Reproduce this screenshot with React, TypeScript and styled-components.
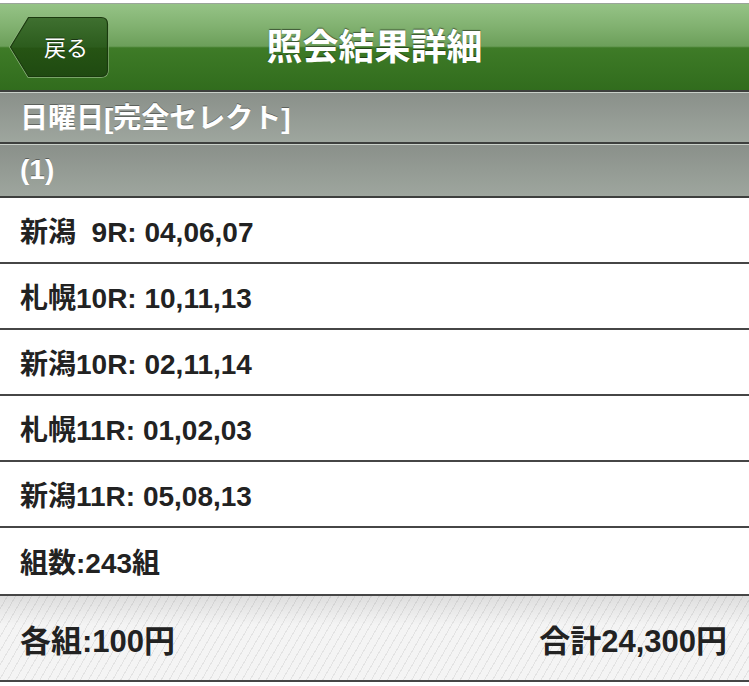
import React from 'react';
import styled, { createGlobalStyle } from 'styled-components';

const GlobalStyle = createGlobalStyle`
    html, body {
        margin: 0;
        padding: 0;
        background: #ffffff;
    }
    body {
        font-family: "Liberation Sans", "Noto Sans CJK JP", sans-serif;
        -webkit-font-smoothing: antialiased;
    }
`;

const Page = styled.div`
    width: 749px;
    padding-top: 3px;
    display: flex;
    flex-direction: column;
`;

const Header = styled.header`
    height: 86px;
    border-top: 1px solid #9aa59a;
    border-bottom: 2px solid #3d3f3d;
    background: linear-gradient(
        to bottom,
        #95c386 0%,
        #82b271 25%,
        #6c9f5a 49%,
        #3e7b27 51%,
        #316c1d 100%
    );
    display: grid;
    grid-template-columns: 1fr auto 1fr;
    align-items: center;
`;

const BackButton = styled.button`
    position: relative;
    justify-self: start;
    margin-left: 9px;
    width: 100px;
    height: 62px;
    padding: 0 0 2px 14px;
    border: none;
    background: none;
    color: #ffffff;
    font-family: "Liberation Sans", "Noto Sans CJK JP", sans-serif;
    font-size: 22px;
    cursor: pointer;
    display: flex;
    align-items: center;
    justify-content: center;
`;

const BackShape = styled.svg`
    position: absolute;
    inset: 0;
`;

const BackLabel = styled.span`
    position: relative;
    text-shadow: 0 -1px 0 rgba(0, 0, 0, 0.45);
`;

const Title = styled.h1`
    margin: 0;
    font-size: 36px;
    font-weight: 700;
    color: #ffffff;
    text-shadow: 0 -1px 1px rgba(0, 0, 0, 0.5);
    padding-bottom: 7px;
`;

const SectionBar = styled.div<{ $height: number; $lift: number }>`
    height: ${p => p.$height}px;
    border-top: 1px solid #c9d0c9;
    border-bottom: 2px solid #3d3f3d;
    background: linear-gradient(to bottom, #8a908a 0%, #9ea69e 100%);
    display: flex;
    align-items: center;
    padding: 0 0 ${p => p.$lift}px 20px;
    box-sizing: content-box;
    color: #ffffff;
    font-size: 28px;
    font-weight: 700;
    text-shadow: 0 -1px 0 rgba(0, 0, 0, 0.35);
`;

const ResultRow = styled.div<{ $tall?: boolean }>`
    box-sizing: border-box;
    height: ${p => (p.$tall ? 68 : 66)}px;
    border-bottom: 2px solid #464646;
    background: #ffffff;
    display: flex;
    align-items: center;
    padding-left: 20px;
    color: #222222;
    font-size: 28px;
    font-weight: 700;
    white-space: pre;
`;

const Footer = styled.footer`
    height: 84px;
    border-bottom: 2px solid #464646;
    background:
        linear-gradient(to bottom, rgba(0, 0, 0, 0.09) 0%, rgba(0, 0, 0, 0) 35%),
        repeating-linear-gradient(
            120deg,
            #f4f4f4 0px,
            #f4f4f4 6px,
            #e3e3e3 6px,
            #e3e3e3 7px
        );
    display: flex;
    align-items: center;
    justify-content: space-between;
    padding: 0 22px 0 20px;
`;

const FooterText = styled.span`
    color: #222222;
    font-size: 31px;
    font-weight: 700;
`;

const races = [
    { place: '新潟', race: '\u00a0\u00a09', nums: '04,06,07' },
    { place: '札幌', race: '10', nums: '10,11,13' },
    { place: '新潟', race: '10', nums: '02,11,14' },
    { place: '札幌', race: '11', nums: '01,02,03' },
    { place: '新潟', race: '11', nums: '05,08,13' },
];

const App: React.FC = () => (
    <>
        <GlobalStyle />
        <Page>
            <Header>
                <BackButton type="button">
                    <BackShape width="100" height="62" viewBox="0 0 100 62">
                        <defs>
                            <linearGradient id="backFill" x1="0" y1="0" x2="0" y2="1">
                                <stop offset="0" stopColor="#3f7030" />
                                <stop offset="0.5" stopColor="#2c5c1d" />
                                <stop offset="0.52" stopColor="#265414" />
                                <stop offset="1" stopColor="#1f4a11" />
                            </linearGradient>
                        </defs>
                        <path
                            d="M19.5 1.5 H92 Q98.5 1.5 98.5 8 V54 Q98.5 60.5 92 60.5 H19.5 L1.5 31 Z"
                            fill="none"
                            stroke="#8fb77f"
                            strokeWidth="2.5"
                            strokeLinejoin="round"
                        />
                        <path
                            d="M19.5 1.5 H92 Q98.5 1.5 98.5 8 V54 Q98.5 60.5 92 60.5 H19.5 L1.5 31 Z"
                            fill="url(#backFill)"
                            stroke="#1a3a0e"
                            strokeWidth="1.2"
                            strokeLinejoin="round"
                        />
                    </BackShape>
                    <BackLabel>戻る</BackLabel>
                </BackButton>
                <Title>照会結果詳細</Title>
                <span />
            </Header>
            <SectionBar $height={45} $lift={4}>日曜日[完全セレクト]</SectionBar>
            <SectionBar $height={49} $lift={2}>(1)</SectionBar>
            {races.map((r, i) => (
                <ResultRow key={i}>{`${r.place}${r.race}R: ${r.nums}`}</ResultRow>
            ))}
            <ResultRow $tall>組数:243組</ResultRow>
            <Footer>
                <FooterText>各組:100円</FooterText>
                <FooterText>合計24,300円</FooterText>
            </Footer>
        </Page>
    </>
);

export default App;
